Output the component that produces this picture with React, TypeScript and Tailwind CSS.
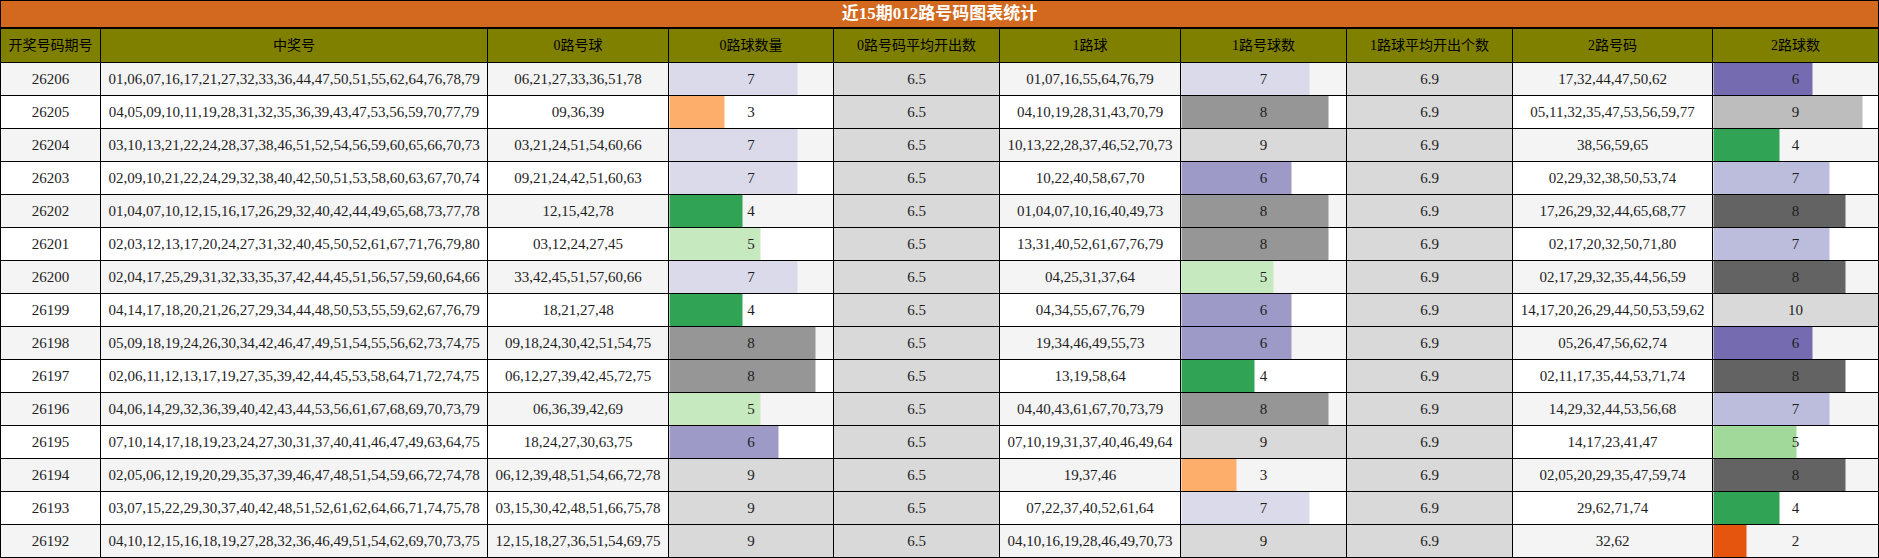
import React from "react";

type Row = {
  id: string;
  all: string;
  r0: string;
  c0: number;
  r1: string;
  c1: number;
  r2: string;
  c2: number;
};

const DATA: Row[] = [
  { id: "26206", all: "01,06,07,16,17,21,27,32,33,36,44,47,50,51,55,62,64,76,78,79", r0: "06,21,27,33,36,51,78", c0: 7, r1: "01,07,16,55,64,76,79", c1: 7, r2: "17,32,44,47,50,62", c2: 6 },
  { id: "26205", all: "04,05,09,10,11,19,28,31,32,35,36,39,43,47,53,56,59,70,77,79", r0: "09,36,39", c0: 3, r1: "04,10,19,28,31,43,70,79", c1: 8, r2: "05,11,32,35,47,53,56,59,77", c2: 9 },
  { id: "26204", all: "03,10,13,21,22,24,28,37,38,46,51,52,54,56,59,60,65,66,70,73", r0: "03,21,24,51,54,60,66", c0: 7, r1: "10,13,22,28,37,46,52,70,73", c1: 9, r2: "38,56,59,65", c2: 4 },
  { id: "26203", all: "02,09,10,21,22,24,29,32,38,40,42,50,51,53,58,60,63,67,70,74", r0: "09,21,24,42,51,60,63", c0: 7, r1: "10,22,40,58,67,70", c1: 6, r2: "02,29,32,38,50,53,74", c2: 7 },
  { id: "26202", all: "01,04,07,10,12,15,16,17,26,29,32,40,42,44,49,65,68,73,77,78", r0: "12,15,42,78", c0: 4, r1: "01,04,07,10,16,40,49,73", c1: 8, r2: "17,26,29,32,44,65,68,77", c2: 8 },
  { id: "26201", all: "02,03,12,13,17,20,24,27,31,32,40,45,50,52,61,67,71,76,79,80", r0: "03,12,24,27,45", c0: 5, r1: "13,31,40,52,61,67,76,79", c1: 8, r2: "02,17,20,32,50,71,80", c2: 7 },
  { id: "26200", all: "02,04,17,25,29,31,32,33,35,37,42,44,45,51,56,57,59,60,64,66", r0: "33,42,45,51,57,60,66", c0: 7, r1: "04,25,31,37,64", c1: 5, r2: "02,17,29,32,35,44,56,59", c2: 8 },
  { id: "26199", all: "04,14,17,18,20,21,26,27,29,34,44,48,50,53,55,59,62,67,76,79", r0: "18,21,27,48", c0: 4, r1: "04,34,55,67,76,79", c1: 6, r2: "14,17,20,26,29,44,50,53,59,62", c2: 10 },
  { id: "26198", all: "05,09,18,19,24,26,30,34,42,46,47,49,51,54,55,56,62,73,74,75", r0: "09,18,24,30,42,51,54,75", c0: 8, r1: "19,34,46,49,55,73", c1: 6, r2: "05,26,47,56,62,74", c2: 6 },
  { id: "26197", all: "02,06,11,12,13,17,19,27,35,39,42,44,45,53,58,64,71,72,74,75", r0: "06,12,27,39,42,45,72,75", c0: 8, r1: "13,19,58,64", c1: 4, r2: "02,11,17,35,44,53,71,74", c2: 8 },
  { id: "26196", all: "04,06,14,29,32,36,39,40,42,43,44,53,56,61,67,68,69,70,73,79", r0: "06,36,39,42,69", c0: 5, r1: "04,40,43,61,67,70,73,79", c1: 8, r2: "14,29,32,44,53,56,68", c2: 7 },
  { id: "26195", all: "07,10,14,17,18,19,23,24,27,30,31,37,40,41,46,47,49,63,64,75", r0: "18,24,27,30,63,75", c0: 6, r1: "07,10,19,31,37,40,46,49,64", c1: 9, r2: "14,17,23,41,47", c2: 5 },
  { id: "26194", all: "02,05,06,12,19,20,29,35,37,39,46,47,48,51,54,59,66,72,74,78", r0: "06,12,39,48,51,54,66,72,78", c0: 9, r1: "19,37,46", c1: 3, r2: "02,05,20,29,35,47,59,74", c2: 8 },
  { id: "26193", all: "03,07,15,22,29,30,37,40,42,48,51,52,61,62,64,66,71,74,75,78", r0: "03,15,30,42,48,51,66,75,78", c0: 9, r1: "07,22,37,40,52,61,64", c1: 7, r2: "29,62,71,74", c2: 4 },
  { id: "26192", all: "04,10,12,15,16,18,19,27,28,32,36,46,49,51,54,62,69,70,73,75", r0: "12,15,18,27,36,51,54,69,75", c0: 9, r1: "04,10,16,19,28,46,49,70,73", c1: 9, r2: "32,62", c2: 2 },
];

// colours per value, 0路 / 1路 columns share one scale
const SCALE_A: Record<number, string> = {
  3: "#fdae6b",
  4: "#31a354",
  5: "#c7e9c0",
  6: "#9e9ac8",
  7: "#dadaeb",
  8: "#969696",
  9: "#d9d9d9",
};

const SCALE_B: Record<number, string> = {
  2: "#e6550d",
  4: "#31a354",
  5: "#a1d99b",
  6: "#756bb1",
  7: "#bcbddc",
  8: "#636363",
  9: "#bdbdbd",
  10: "#d9d9d9",
};

const HEADERS = [
  "开奖号码期号",
  "中奖号",
  "0路号球",
  "0路球数量",
  "0路号码平均开出数",
  "1路球",
  "1路号球数",
  "1路球平均开出个数",
  "2路号码",
  "2路球数",
];

const WIDTHS = [100, 387, 181, 165, 166, 181, 166, 166, 200, 166];

const BarCell = ({ value, max, scale }: { value: number; max: number; scale: Record<number, string> }) => {
  const pct = (value / max) * 100;
  const color = scale[value];
  return (
    <td
      className="border border-black text-center p-0"
      style={{ background: `linear-gradient(to right, ${color} ${pct}%, transparent ${pct}%)` }}
    >
      {value}
    </td>
  );
};

export default function App() {
  return (
    <div className="w-[1879px] bg-white text-[#1e1e1e]" style={{ fontFamily: '"Liberation Serif", "Noto Sans CJK SC", serif' }}>
      <table className="w-[1879px] table-fixed border-collapse border border-black text-[15px]">
        <colgroup>
          {WIDTHS.map((w, i) => (
            <col key={i} style={{ width: w }} />
          ))}
        </colgroup>
        <thead>
          <tr className="h-[27px]">
            <th colSpan={10} className="border border-black border-b-2 bg-[#d2691e] text-white font-bold text-[17px] p-0 leading-none">
              近15期012路号码图表统计
            </th>
          </tr>
          <tr className="h-[35px] bg-[#808000]">
            {HEADERS.map((h) => (
              <th key={h} className="border border-black font-normal text-[14px] text-black p-0">
                {h}
              </th>
            ))}
          </tr>
        </thead>
        <tbody>
          {DATA.map((row, i) => (
            <tr key={row.id} className={`h-[33px] ${i % 2 === 0 ? "bg-[#f4f4f4]" : "bg-white"}`}>
              <td className="border border-black text-center p-0">{row.id}</td>
              <td className="border border-black text-center p-0">{row.all}</td>
              <td className="border border-black text-center p-0">{row.r0}</td>
              <BarCell value={row.c0} max={9} scale={SCALE_A} />
              <td className="border border-black text-center p-0 bg-[#d9d9d9]">6.5</td>
              <td className="border border-black text-center p-0">{row.r1}</td>
              <BarCell value={row.c1} max={9} scale={SCALE_A} />
              <td className="border border-black text-center p-0 bg-[#d9d9d9]">6.9</td>
              <td className="border border-black text-center p-0">{row.r2}</td>
              <BarCell value={row.c2} max={10} scale={SCALE_B} />
            </tr>
          ))}
        </tbody>
      </table>
    </div>
  );
}
